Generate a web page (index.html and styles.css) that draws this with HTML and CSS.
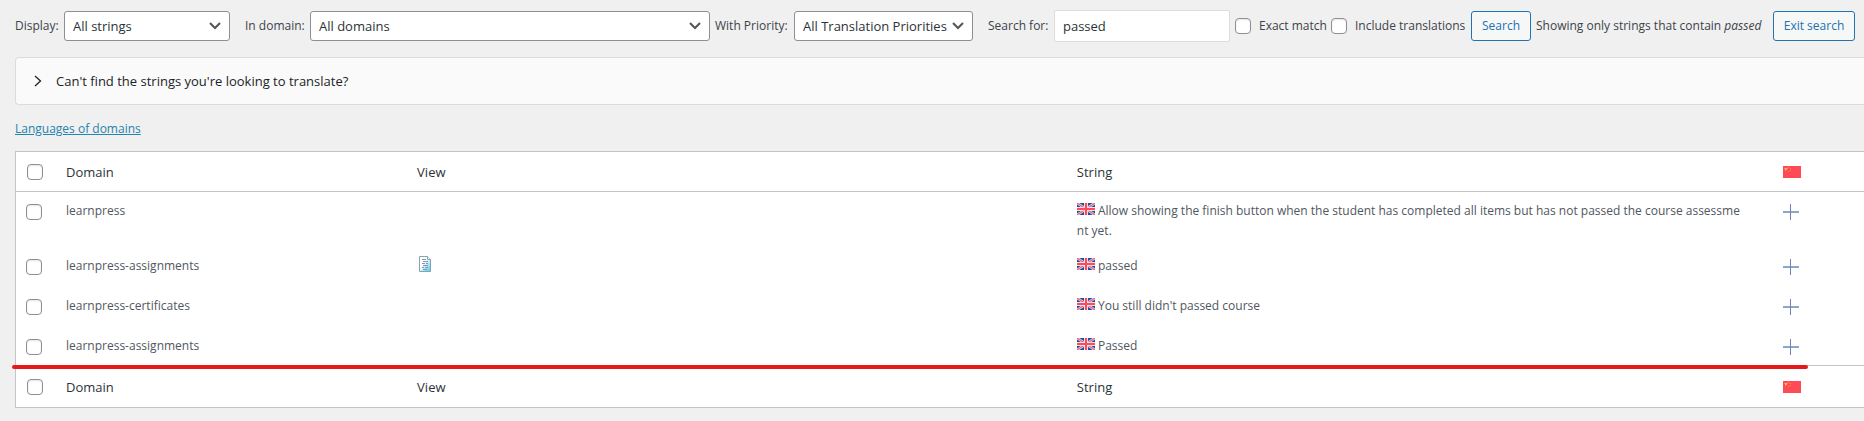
FILE: index.html
```
<!DOCTYPE html>
<html lang="en">
<head>
<meta charset="utf-8">
<title>String Translation</title>
<link rel="stylesheet" href="styles.css">
</head>
<body>
<svg class="defs" aria-hidden="true">
  <symbol id="flag-gb" viewBox="0 0 18 12" preserveAspectRatio="none">
    <path fill="#1352a8" d="M0 0h18v12H0z"/>
    <path stroke="#e6dcec" stroke-width="2.6" d="M0 0l18 12M18 0L0 12"/>
    <path stroke="#ff5c68" stroke-width="1.1" d="M0 0l18 12M18 0L0 12"/>
    <path fill="#f3dfea" d="M7 0h4v12H7zM0 4h18v4H0z"/>
    <path fill="#ff4b58" d="M8 0h2v12H8zM0 5h18v2H0z"/>
  </symbol>
  <symbol id="flag-cn" viewBox="0 0 18 12">
    <path fill="#ff4b55" d="M0 0h18v12H0z"/>
    <path fill="#ffb04f" d="M2 2h2v2H2z"/>
    <path fill="#ff8a52" d="M1 2h1v1H1zM4 2h1v1H4zM2 4h1v1H2zM5 1h1v1H5zM7 2h1v1H7zM7 4h1v1H7zM5 5h1v1H5z"/>
  </symbol>
  <symbol id="plus" viewBox="0 0 16 16">
    <path fill="#8ba6c8" d="M0 7h16v2H0z"/>
    <path fill="#7080b8" d="M7 0h1v16H7z"/>
  </symbol>
</svg>

<form class="toolbar">
  <label class="label-display" for="display">Display:</label>
  <select id="display" class="select select-display"><option>All strings</option></select>
  <label class="label-domain" for="domain">In domain:</label>
  <select id="domain" class="select select-domain"><option>All domains</option></select>
  <label class="label-priority" for="priority">With Priority:</label>
  <select id="priority" class="select select-priority"><option>All Translation Priorities</option></select>
  <label class="label-search" for="search">Search for:</label>
  <input id="search" class="search-input" type="text" value="passed">
  <label class="option option-exact"><input class="checkbox" type="checkbox">Exact match</label>
  <label class="option option-include"><input class="checkbox" type="checkbox">Include translations</label>
  <button class="button button-search" type="button">Search</button>
  <span class="result-note">Showing only strings that contain <em>passed</em></span>
  <button class="button button-exit" type="button">Exit search</button>
</form>

<main class="content">
  <button class="panel" type="button">
    <svg class="chevron" viewBox="0 0 8 12"><path d="M1 1l5.500 5L1 11"/></svg>
    Can't find the strings you're looking to translate?
  </button>
  <a class="domains-link" href="#">Languages of domains</a>

  <div class="table-wrap">
    <table class="strings">
      <colgroup><col class="col-check"><col class="col-domain"><col class="col-view"><col class="col-string"><col></colgroup>
      <thead>
        <tr>
          <th class="check"><input class="checkbox" type="checkbox" aria-label="Select all"></th>
          <th>Domain</th><th>View</th><th>String</th>
          <th><svg class="flag" role="img" aria-label="Chinese"><use href="#flag-cn"/></svg></th>
        </tr>
      </thead>
      <tbody>
        <tr>
          <td class="check"><input class="checkbox" type="checkbox" aria-label="Select string"></td>
          <td>learnpress</td><td></td>
          <td class="string"><svg class="flag" role="img" aria-label="English"><use href="#flag-gb"/></svg> Allow showing the finish button when the student has completed all items but has not passed the course assessment yet.</td>
          <td><a class="add" href="#" aria-label="Add translation"><svg><use href="#plus"/></svg></a></td>
        </tr>
        <tr>
          <td class="check"><input class="checkbox" type="checkbox" aria-label="Select string"></td>
          <td>learnpress-assignments</td>
          <td><a class="view" href="#" aria-label="View in source"><svg viewBox="0 0 12 16">
            <defs><linearGradient id="page" x1="0" y1="0" x2="1" y2="1"><stop offset="0.400" stop-color="#fff"/><stop offset="1" stop-color="#48c4f4"/></linearGradient></defs>
            <path fill="url(#page)" stroke="#87a3ae" d="M.5.500h8l3 3v12H.5z"/>
            <path fill="#fff" stroke="#87a3ae" d="M8.500.500v3h3"/>
            <path stroke="#7f98a3" d="M3 3.500h4M4 5.500h5M3 7.500h3M7 7.500h2M4 9.500h5M3 11.500h2M6 11.500h3M4 13.500h4"/>
          </svg></a></td>
          <td class="string"><svg class="flag" role="img" aria-label="English"><use href="#flag-gb"/></svg> passed</td>
          <td><a class="add" href="#" aria-label="Add translation"><svg><use href="#plus"/></svg></a></td>
        </tr>
        <tr>
          <td class="check"><input class="checkbox" type="checkbox" aria-label="Select string"></td>
          <td>learnpress-certificates</td><td></td>
          <td class="string"><svg class="flag" role="img" aria-label="English"><use href="#flag-gb"/></svg> You still didn't passed course</td>
          <td><a class="add" href="#" aria-label="Add translation"><svg><use href="#plus"/></svg></a></td>
        </tr>
        <tr>
          <td class="check"><input class="checkbox" type="checkbox" aria-label="Select string"></td>
          <td>learnpress-assignments</td><td></td>
          <td class="string"><svg class="flag" role="img" aria-label="English"><use href="#flag-gb"/></svg> Passed</td>
          <td><a class="add" href="#" aria-label="Add translation"><svg><use href="#plus"/></svg></a></td>
        </tr>
      </tbody>
      <tfoot>
        <tr>
          <th class="check"><input class="checkbox" type="checkbox" aria-label="Select all"></th>
          <th>Domain</th><th>View</th><th>String</th>
          <th><svg class="flag" role="img" aria-label="Chinese"><use href="#flag-cn"/></svg></th>
        </tr>
      </tfoot>
    </table>
    <div class="marker"></div>
  </div>
</main>
</body>
</html>
```
FILE: styles.css
```
* { box-sizing: border-box; }

body {
  margin: 0;
  padding: 10px 0 0 15px;
  background: #f0f0f0;
  color: #3c434a;
  font: 12px/20px "Open Sans", "Noto Sans", sans-serif;
  overflow-x: hidden;
}

.defs { display: none; }

.toolbar {
  display: flex;
  align-items: center;
  gap: 5px;
  height: 32px;
  white-space: nowrap;
}

.toolbar > label, .result-note, .button { flex: none; }
.label-display { width: 44px; }
.label-domain { width: 60px; margin-left: 10px; }
.label-priority { width: 74px; }
.label-search { width: 61px; margin-left: 10px; }
.result-note { width: 232px; }

.select {
  height: 30px;
  padding: 0 24px 0 8px;
  appearance: none;
  border: 1px solid #8c8f94;
  border-radius: 3px;
  background: #fff url("data:image/svg+xml,%3Csvg xmlns='http://www.w3.org/2000/svg' viewBox='0 0 12 8'%3E%3Cpath d='M1 1l5 5 5-5' fill='none' stroke='%23555' stroke-width='2'/%3E%3C/svg%3E") no-repeat right 8px center / 12px 8px;
  color: #2c3338;
  font: inherit;
  font-size: 13px;
}

.select-display { width: 166px; }
.select-domain { width: 400px; }
.select-priority { width: 179px; }

.search-input {
  width: 176px;
  height: 32px;
  padding: 0 8px;
  border: 1px solid #ddd;
  border-radius: 2px;
  background: #fff;
  color: #2c3338;
  font: inherit;
  font-size: 13px;
}

.checkbox {
  flex: none;
  display: block;
  width: 16px;
  height: 16px;
  margin: 0;
  appearance: none;
  border: 1px solid #8c8f94;
  border-radius: 4px;
  background: #fff;
  box-shadow: inset 0 1px 2px rgba(0, 0, 0, .1);
}

.option { display: flex; align-items: center; gap: 8px; }
.option-exact { width: 91px; }
.option-include { width: 135px; }

.button {
  height: 30px;
  padding: 0;
  border: 1px solid #2271b1;
  border-radius: 3px;
  background: #f6f7f7;
  color: #2271b1;
  font: inherit;
}

.button-search { width: 60px; }
.button-exit { width: 82px; }

.panel {
  display: flex;
  align-items: center;
  gap: 14px;
  width: 100%;
  height: 48px;
  margin-top: 15px;
  padding: 0 18px;
  border: 1px solid #dcdcde;
  border-right: 0;
  border-radius: 4px 0 0 4px;
  background: #fafafa;
  color: #1d2327;
  font: inherit;
  font-size: 13px;
}

.chevron { width: 8px; height: 12px; fill: none; stroke: #1d2327; stroke-width: 1.3; }

.domains-link {
  display: block;
  width: fit-content;
  margin: 14px 0 12px;
  color: #2583ad;
}

.table-wrap {
  position: relative;
  border: 1px solid #c3c4c7;
  border-right: 0;
  background: #fff;
}

.strings { width: 100%; table-layout: fixed; border-collapse: collapse; }
.col-check { width: 40px; }
.col-domain { width: 19%; }
.col-view { width: 35.7%; }
.col-string { width: 38.2%; }

th, td { padding: 0 10px; text-align: left; }
th {
  height: 39px;
  padding-top: 2px;
  color: #2c3338;
  font-size: 13px;
  font-weight: 400;
}
thead th { border-bottom: 1px solid #c3c4c7; }
tfoot th { height: 41px; border-top: 1px solid #c3c4c7; }
td {
  height: 40px;
  padding-top: 9px;
  padding-bottom: 6px;
  color: #50575e;
  vertical-align: top;
}
tbody tr:last-child td { height: 39px; }
th.check { padding-left: 11px; padding-right: 0; }
td.check { padding-top: 12px; padding-right: 0; }
.string { padding-right: 29px; word-break: break-all; }

.flag { width: 18px; height: 12px; }
th .flag { display: block; }
.add, .view { display: block; }
.add svg { display: block; width: 16px; height: 16px; margin-top: 3px; }
.view svg { display: block; width: 12px; height: 16px; margin-left: 2px; fill: none; }

/* Hand-drawn underline over the last row */
.marker {
  position: absolute;
  left: -4px;
  right: 56px;
  bottom: 38px;
  height: 4px;
  border-radius: 2px;
  background: #e61919;
}
```
